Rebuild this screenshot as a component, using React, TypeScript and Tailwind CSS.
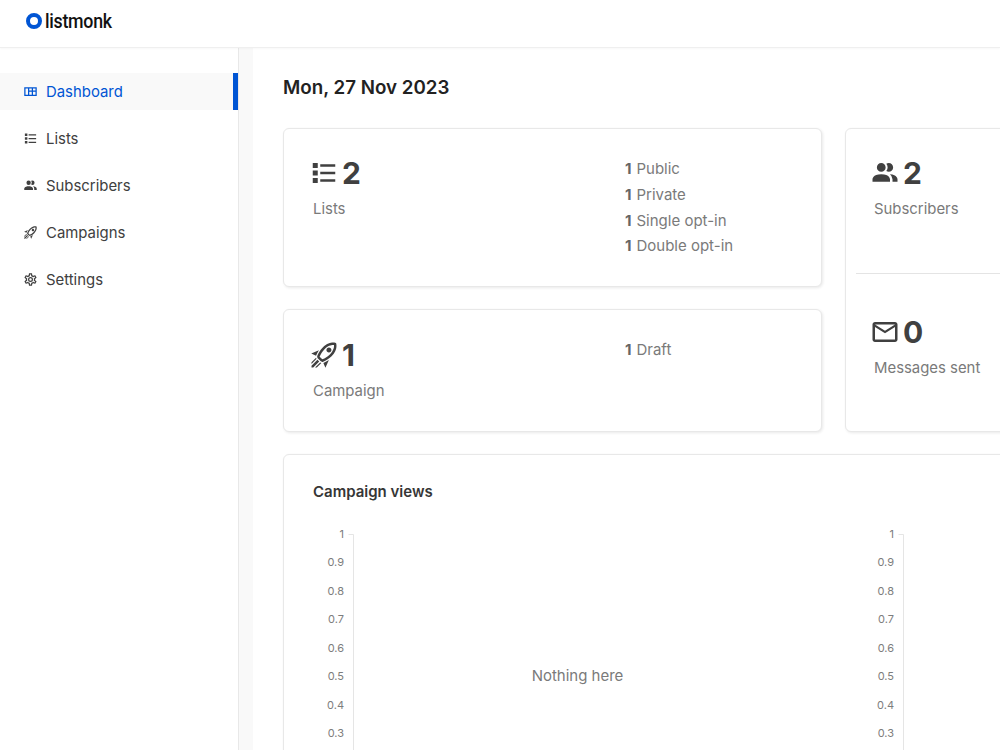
const P = {
  dash: "M2 5V19H22V5H2M4 7H8V17H4V7M10 7H14V10.5H10V7M16 7H20V10.5H16V7M10 12.5H14V17H10V12.5M16 12.5H20V17H16V12.5Z",
  list: "M3,4H7V8H3V4M9,5V7H21V5H9M3,10H7V14H3V10M9,11V13H21V11H9M3,16H7V20H3V16M9,17V19H21V17H9",
  users: "M16 17V19H2V17S2 13 9 13 16 17 16 17M12.5 7.5A3.5 3.5 0 1 0 9 11A3.5 3.5 0 0 0 12.5 7.5M15.94 13A5.32 5.32 0 0 1 18 17V19H22V17S22 13.37 15.94 13M15 4A3.39 3.39 0 0 0 13.07 4.59A5 5 0 0 1 13.07 10.41A3.39 3.39 0 0 0 15 11A3.5 3.5 0 0 0 15 4Z",
  rocket: "M13.13 22.19L11.5 18.36C13.07 17.78 14.54 17 15.9 16.09L13.13 22.19M5.64 12.5L1.81 10.87L7.91 8.1C7 9.46 6.22 10.93 5.64 12.5M19.22 4C19.5 4 19.75 4 19.96 4.05C20.13 5.44 19.94 8.3 16.66 11.58C14.96 13.29 12.93 14.6 10.65 15.47L8.5 13.37C9.42 11.06 10.73 9.03 12.42 7.34C15.18 4.58 17.64 4 19.22 4M19.22 2C17.24 2 14.24 2.69 11 5.93C8.81 8.12 7.5 10.53 6.65 12.64C6.37 13.39 6.56 14.21 7.11 14.77L9.24 16.89C9.62 17.27 10.13 17.5 10.66 17.5C10.89 17.5 11.13 17.44 11.36 17.35C13.5 16.53 15.88 15.19 18.07 13C23.73 7.34 21.61 2.39 21.61 2.39S20.7 2 19.22 2M14.54 9.46C13.76 8.68 13.76 7.41 14.54 6.63S16.59 5.85 17.37 6.63C18.14 7.41 18.15 8.68 17.37 9.46C16.59 10.24 15.32 10.24 14.54 9.46M6.24 22L9.88 18.36C9.54 18.27 9.21 18.12 8.91 17.91L4.83 22H6.24M2 22H3.41L8.18 17.24L6.76 15.83L2 20.59V22M2 19.17L6.09 15.09C5.88 14.79 5.73 14.47 5.64 14.12L2 17.76V19.17Z",
  cog: "M12,8A4,4 0 0,1 16,12A4,4 0 0,1 12,16A4,4 0 0,1 8,12A4,4 0 0,1 12,8M12,10A2,2 0 0,0 10,12A2,2 0 0,0 12,14A2,2 0 0,0 14,12A2,2 0 0,0 12,10M10,22C9.75,22 9.54,21.82 9.5,21.58L9.13,18.93C8.5,18.68 7.96,18.34 7.44,17.94L4.95,18.95C4.73,19.03 4.46,18.95 4.34,18.73L2.34,15.27C2.21,15.05 2.27,14.78 2.46,14.63L4.57,12.97L4.5,12L4.57,11L2.46,9.37C2.27,9.22 2.21,8.95 2.34,8.73L4.34,5.27C4.46,5.05 4.73,4.96 4.95,5.05L7.44,6.05C7.96,5.66 8.5,5.32 9.13,5.07L9.5,2.42C9.54,2.18 9.75,2 10,2H14C14.25,2 14.46,2.18 14.5,2.42L14.87,5.07C15.5,5.32 16.04,5.66 16.56,6.05L19.05,5.05C19.27,4.96 19.54,5.05 19.66,5.27L21.66,8.73C21.79,8.95 21.73,9.22 21.54,9.37L19.43,11L19.5,12L19.43,13L21.54,14.63C21.73,14.78 21.79,15.05 21.66,15.27L19.66,18.73C19.54,18.95 19.27,19.04 19.05,18.95L16.56,17.95C16.04,18.34 15.5,18.68 14.87,18.93L14.5,21.58C14.46,21.82 14.25,22 14,22H10M11.25,4L10.88,6.61C9.68,6.86 8.62,7.5 7.85,8.39L5.44,7.35L4.69,8.65L6.8,10.2C6.4,11.37 6.4,12.64 6.8,13.8L4.68,15.36L5.43,16.66L7.86,15.62C8.63,16.5 9.68,17.14 10.87,17.38L11.24,20H12.76L13.13,17.39C14.32,17.14 15.37,16.5 16.14,15.62L18.57,16.66L19.32,15.36L17.2,13.81C17.6,12.64 17.6,11.37 17.2,10.2L19.31,8.65L18.56,7.35L16.15,8.39C15.38,7.5 14.32,6.86 13.12,6.62L12.75,4H11.25Z",
  mail: "M22 6C22 4.9 21.1 4 20 4H4C2.9 4 2 4.9 2 6V18C2 19.1 2.9 20 4 20H20C21.1 20 22 19.1 22 18V6M20 6L12 11L4 6H20M20 18H4V8L12 13L20 8V18Z",
};

function Icon({ d, className }: { d: string; className: string }) {
  return (
    <svg viewBox="0 0 24 24" fill="currentColor" className={className}>
      <path d={d} />
    </svg>
  );
}

function NavItem({ d, label, active }: { d: string; label: string; active?: boolean }) {
  return (
    <div
      className={
        active
          ? "flex h-[37px] items-center gap-[8px] border-r-[5px] border-[#0055d4] bg-[#f9f9f9] pl-[23px] text-[#0055d4]"
          : "flex h-[37px] items-center gap-[8px] pl-[23px] text-[#404040]"
      }
    >
      <Icon d={d} className="h-[15px] w-[15px] shrink-0" />
      <span className="pt-[1px] text-[14.9px] leading-none">{label}</span>
    </div>
  );
}

function Stat({ d, n, label }: { d: string; n: string; label: string }) {
  return (
    <div>
      <div className="flex h-[36px] items-center gap-[3px] text-[#404040]">
        <Icon d={d} className="-ml-[3px] h-[30px] w-[30px]" />
        <span className="text-[30px] font-bold leading-none">{n}</span>
      </div>
      <div className="mt-[9px] pl-[1px] text-[14.9px] leading-[18px] text-[#7a7a7a]">{label}</div>
    </div>
  );
}

function Fact({ label }: { label: string }) {
  return (
    <div className="flex h-[25.75px] gap-[5px] text-[15px] leading-[26px] text-[#7a7a7a]">
      <span className="font-bold text-[#666666]">1</span>
      <span>{label}</span>
    </div>
  );
}

const ticks = ["1", "0.9", "0.8", "0.7", "0.6", "0.5", "0.4", "0.3"];

function Chart({ empty }: { empty?: boolean }) {
  return (
    <div className="w-[550px] shrink-0">
      <svg width="550" height="300" className="block" fontFamily="Inter, sans-serif">
        <path d="M35.5 10.5H40.5V300" fill="none" stroke="#e5e5e5" />
        {ticks.map((t, i) => (
          <text key={t} x="31" y={13.5 + i * 28.55} textAnchor="end" fontSize="11" fill="#7d7d7d">
            {t}
          </text>
        ))}
        {empty && (
          <text x="264.5" y="156.5" textAnchor="middle" fontSize="15" fill="#7a7a7a">
            Nothing here
          </text>
        )}
      </svg>
    </div>
  );
}

const card = "rounded-[6px] border border-[#e8e8e8] bg-white shadow-[1px_1px_3px_rgba(0,0,0,0.09)]";

export default function App() {
  return (
    <div className="flex h-[750px] w-[1000px] flex-col overflow-hidden bg-white font-['Inter',sans-serif]">
      <header className="relative z-10 flex h-[48px] shrink-0 items-center gap-[3px] border-b border-[#efefef] bg-white pb-[5px] pl-[26px] shadow-[0_1px_2px_rgba(0,0,0,0.03)]">
        <span className="h-[16px] w-[16px] rounded-full border-[4px] border-[#0055d4]" />
        <span className="origin-left scale-x-[0.89] font-['Roboto',sans-serif] text-[20px] font-medium leading-none tracking-[-0.3px] text-[#111111]">
          listmonk
        </span>
      </header>
      <div className="flex min-h-0 flex-1">
        <aside className="w-[239px] shrink-0 border-r border-[#e8e8e8] pt-[25px]">
          <nav className="flex w-[238px] flex-col gap-[10px]">
            <NavItem d={P.dash} label="Dashboard" active />
            <NavItem d={P.list} label="Lists" />
            <NavItem d={P.users} label="Subscribers" />
            <NavItem d={P.rocket} label="Campaigns" />
            <NavItem d={P.cog} label="Settings" />
          </nav>
        </aside>
        <div className="w-[14px] shrink-0 bg-[#f9f9f9]" />
        <main className="min-w-0 flex-1 overflow-hidden pl-[30px]">
          <h1 className="mt-[28px] text-[18.75px] font-semibold leading-[24px] text-[#222222]">Mon, 27 Nov 2023</h1>
          <div className="mt-[28px] flex w-[860px] gap-[23px]">
            <div className="flex w-[539px] shrink-0 flex-col gap-[22px]">
              <div className={`${card} flex h-[159px] pl-[28px] pt-[26px]`}>
                <div className="w-[313px] shrink-0">
                  <Stat d={P.list} n="2" label="Lists" />
                </div>
                <div className="mt-[1px]">
                  <Fact label="Public" />
                  <Fact label="Private" />
                  <Fact label="Single opt-in" />
                  <Fact label="Double opt-in" />
                </div>
              </div>
              <div className={`${card} flex h-[123px] pl-[28px] pt-[27px]`}>
                <div className="w-[313px] shrink-0">
                  <Stat d={P.rocket} n="1" label="Campaign" />
                </div>
                <div>
                  <Fact label="Draft" />
                </div>
              </div>
            </div>
            <div className={`${card} h-[304px] w-[300px] shrink-0 pl-[10px] pt-[26px]`}>
              <div className="h-[119px] border-b border-[#e4e4e4] pl-[17px]">
                <Stat d={P.users} n="2" label="Subscribers" />
              </div>
              <div className="pl-[17px] pt-[40px]">
                <Stat d={P.mail} n="0" label="Messages sent" />
              </div>
            </div>
          </div>
          <div className={`${card} mt-[22px] h-[400px] w-[1200px] pl-[29px] pt-[27px]`}>
            <h2 className="text-[15px] font-semibold leading-[20px] text-[#363636]">Campaign views</h2>
            <div className="mt-[22px] flex">
              <Chart empty />
              <Chart />
            </div>
          </div>
        </main>
      </div>
    </div>
  );
}
